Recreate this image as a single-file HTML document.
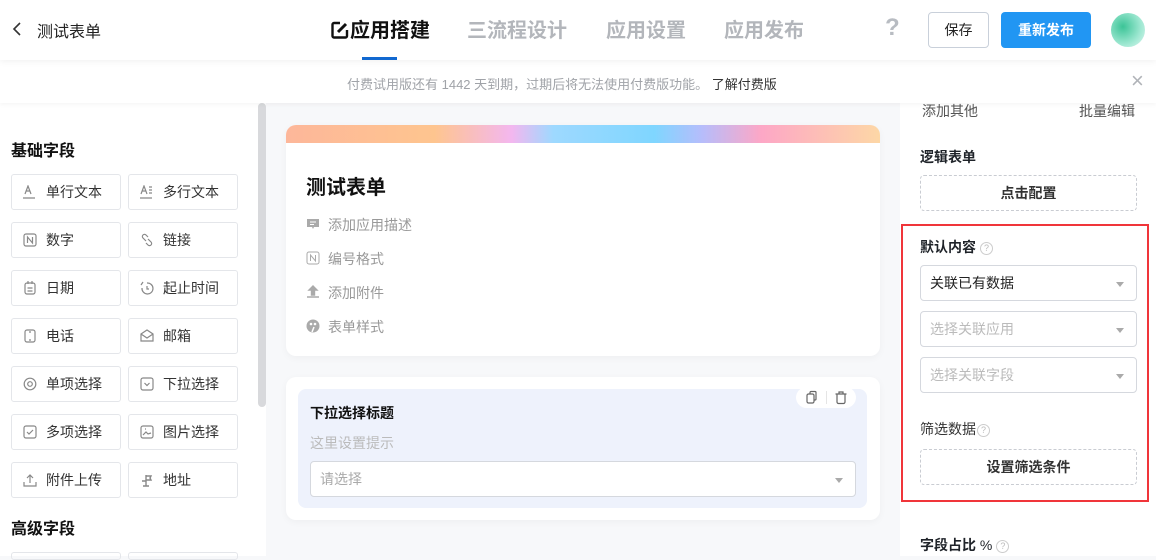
<!DOCTYPE html>
<html><head><meta charset="utf-8"><style>
*{box-sizing:border-box;margin:0;padding:0}
body{width:1156px;height:556px;overflow:hidden;background:#f7f8fa;font-family:"Liberation Sans","Noto Sans CJK SC",sans-serif;position:relative;color:#1f2329}
.a{position:absolute}
.hdr{left:0;top:0;width:1156px;height:60px;background:#fff;box-shadow:0 2px 6px rgba(0,0,0,.05);z-index:3}
.tab{top:16px;font-size:20px;font-weight:bold;color:#b3b6bb;line-height:30px}
.notice{left:0;top:60px;width:1156px;height:43px;background:#fff;z-index:2;box-shadow:0 2px 4px rgba(0,0,0,.04)}
.left{left:0;top:103px;width:266px;height:453px;background:#fff}
.fb{width:110px;height:36px;border:1px solid #e4e6ea;border-radius:3px;font-size:14px;color:#333;line-height:34px;padding-left:34px}
.fb svg{position:absolute;left:11px;top:10px}
.sec{font-size:16px;font-weight:bold;color:#111}
.card{background:#fff;border-radius:10px;box-shadow:0 2px 8px rgba(0,0,0,.04)}
.it{font-size:14px;color:#999;left:328px}
.ic{left:306px;width:14px;height:14px}
.right{left:900px;top:103px;width:256px;height:453px;background:#fff}
.lbl{font-size:14px;font-weight:bold;color:#1f2329}
.dash{border:1px dashed #c9ccd2;border-radius:4px;font-size:14px;font-weight:bold;color:#333;text-align:center;line-height:34px;height:36px;width:217px;left:920px}
.sel{left:920px;width:217px;height:36px;border:1px solid #d5d8de;border-radius:4px;font-size:14px;line-height:34px;padding-left:9px;color:#bbb}
.sel:after{content:"";position:absolute;right:12px;top:16px;border:4px solid transparent;border-top:5px solid #aaa}
.q{display:inline-block;width:13px;height:13px;border:1px solid #ccc;border-radius:50%;font-size:9px;color:#bbb;text-align:center;line-height:11px;font-weight:normal;vertical-align:1px;margin-left:4px}
</style></head><body>
<div class="a hdr">
  <svg class="a" style="left:12px;top:22px" width="10" height="14"><path d="M8 1 L2 7 L8 13" fill="none" stroke="#333" stroke-width="1.6"/></svg>
  <div class="a" style="left:37px;top:18px;font-size:16px;color:#222">测试表单</div>
  <svg class="a" style="left:330px;top:20px" width="20" height="20"><path d="M10 3 H4 a1.5 1.5 0 0 0 -1.5 1.5 V16 a1.5 1.5 0 0 0 1.5 1.5 H15.5 a1.5 1.5 0 0 0 1.5 -1.5 V10" fill="none" stroke="#111" stroke-width="2.4"/><path d="M8 12 L16 4" stroke="#111" stroke-width="3"/></svg>
  <div class="a tab" style="left:350px;color:#111">应用搭建</div>
  <div class="a" style="left:362px;top:57px;width:35px;height:3px;background:#1168d0"></div>
  <div class="a tab" style="left:467px">三流程设计</div>
  <div class="a tab" style="left:606px">应用设置</div>
  <div class="a tab" style="left:724px">应用发布</div>
  <div class="a" style="left:885px;top:14px;font-size:24px;font-weight:bold;color:#b8bcc2">?</div>
  <div class="a" style="left:928px;top:12px;width:61px;height:36px;border:1px solid #c9d0da;border-radius:4px;font-size:14px;text-align:center;line-height:34px;color:#222">保存</div>
  <div class="a" style="left:1001px;top:12px;width:90px;height:36px;background:#2196f3;border-radius:4px;font-size:14px;font-weight:bold;color:#fff;text-align:center;line-height:36px">重新发布</div>
  <div class="a" style="left:1111px;top:13px;width:34px;height:34px;border-radius:50%;background:radial-gradient(circle at 35% 40%,#3cc497,#9fe8d2 60%,#dff7f1)"></div>
</div>
<div class="a notice">
  <div class="a" style="left:347px;top:14px;font-size:13px;color:#a0a3a8">付费试用版还有 1442 天到期，过期后将无法使用付费版功能。 <span style="color:#333">了解付费版</span></div>
  <div class="a" style="left:1131px;top:8px;font-size:22px;color:#b0b3b8">×</div>
</div>
<div class="a left"></div>
<div class="a" style="left:258px;top:103px;width:8px;height:304px;background:#d8d9dc;border-radius:4px"></div>
<div class="a sec" style="left:11px;top:137px">基础字段</div>
<div class="a sec" style="left:11px;top:515px">高级字段</div>

<div class="a fb" style="left:11px;top:174px"><svg width="14" height="14"><path d="M2 9 L5 1 L8 9 M3 6 H7 M0 13 H12" stroke="#888" fill="none" stroke-width="1.2"/></svg>单行文本</div>
<div class="a fb" style="left:128px;top:174px"><svg width="14" height="14"><path d="M1 9 L4 1 L7 9 M2 6 H6 M9 2 H12 M9 5 H12 M9 8 H12 M0 13 H12" stroke="#888" fill="none" stroke-width="1.2"/></svg>多行文本</div>
<div class="a fb" style="left:11px;top:222px"><svg width="14" height="14"><rect x="1" y="1" width="12" height="12" rx="2" stroke="#888" fill="none" stroke-width="1.2"/><path d="M4.5 10 V4 L9.5 10 V4" stroke="#888" fill="none" stroke-width="1.2"/></svg>数字</div>
<div class="a fb" style="left:128px;top:222px"><svg width="14" height="14"><path d="M6 8 L3 5 a2 2 0 0 1 3 -3 L8 4 M8 6 L11 9 a2 2 0 0 1 -3 3 L6 10" stroke="#888" fill="none" stroke-width="1.2"/></svg>链接</div>
<div class="a fb" style="left:11px;top:270px"><svg width="14" height="14"><rect x="2" y="2" width="10" height="11" rx="2" stroke="#888" fill="none" stroke-width="1.2"/><path d="M5 0 V3 M9 0 V3 M4.5 7 H9.5 M4.5 10 H9.5" stroke="#888" stroke-width="1.2"/></svg>日期</div>
<div class="a fb" style="left:128px;top:270px"><svg width="14" height="14"><path d="M7 2 A5.5 5.5 0 1 1 2 7 M1 4 L3 1 M7 5 V8 H9" stroke="#888" fill="none" stroke-width="1.2"/></svg>起止时间</div>
<div class="a fb" style="left:11px;top:318px"><svg width="14" height="14"><rect x="2" y="1" width="10" height="12" rx="2" stroke="#888" fill="none" stroke-width="1.2"/><path d="M6 3 H8 M6 11 H8" stroke="#888" stroke-width="1.2"/></svg>电话</div>
<div class="a fb" style="left:128px;top:318px"><svg width="14" height="14"><path d="M1 5 L7 1 L13 5 V12 H1 Z M1 5 L7 9 L13 5" stroke="#888" fill="none" stroke-width="1.2"/></svg>邮箱</div>
<div class="a fb" style="left:11px;top:366px"><svg width="14" height="14"><circle cx="7" cy="7" r="5.8" stroke="#888" fill="none" stroke-width="1.2"/><circle cx="7" cy="7" r="2.3" stroke="#888" fill="none" stroke-width="1.2"/></svg>单项选择</div>
<div class="a fb" style="left:128px;top:366px"><svg width="14" height="14"><rect x="1" y="1" width="12" height="12" rx="2" stroke="#888" fill="none" stroke-width="1.2"/><path d="M4.5 6 L7 8.5 L9.5 6" stroke="#888" fill="none" stroke-width="1.2"/></svg>下拉选择</div>
<div class="a fb" style="left:11px;top:414px"><svg width="14" height="14"><rect x="1" y="1" width="12" height="12" rx="2" stroke="#888" fill="none" stroke-width="1.2"/><path d="M4 7 L6 9 L10 5" stroke="#888" fill="none" stroke-width="1.2"/></svg>多项选择</div>
<div class="a fb" style="left:128px;top:414px"><svg width="14" height="14"><rect x="1" y="1" width="12" height="12" rx="2" stroke="#888" fill="none" stroke-width="1.2"/><path d="M3 10 L6 7 L8 9 L11 8 M5 4 H6" stroke="#888" fill="none" stroke-width="1.2"/></svg>图片选择</div>
<div class="a fb" style="left:11px;top:462px"><svg width="14" height="14"><path d="M7 10 V2 M4 5 L7 2 L10 5 M1 9 V13 H13 V9" stroke="#888" fill="none" stroke-width="1.2"/></svg>附件上传</div>
<div class="a fb" style="left:128px;top:462px"><svg width="14" height="14"><path d="M6 2 V13 M3 13 H9 M6 3 H11 L10 5 L11 7 H6 M6 8 H2" stroke="#888" fill="none" stroke-width="1.4"/></svg>地址</div>
<div class="a" style="left:11px;top:552px;width:110px;height:8px;border:1px solid #e4e6ea;border-radius:3px"></div>
<div class="a" style="left:128px;top:552px;width:110px;height:8px;border:1px solid #e4e6ea;border-radius:3px"></div>

<div class="a card" style="left:286px;top:125px;width:594px;height:231px;overflow:hidden">
  <div style="height:18px;background:linear-gradient(90deg,#fdb79a,#fec58f 25%,#f3b7ef 38%,#9ed9ff 45%,#7fd6ff 62%,#b6bdfb 70%,#fda7c6 80%,#fdd7a6)"></div>
</div>
<div class="a" style="left:306px;top:171px;font-size:20px;font-weight:bold;color:#111">测试表单</div>
<svg class="a ic" style="top:217px"><path d="M1 2 H13 V10 H8 L7 12 L6 10 H1 Z" fill="#aaa"/><path d="M4 5 H10 M4 7.5 H8" stroke="#fff"/></svg>
<div class="a it" style="top:215px">添加应用描述</div>
<svg class="a ic" style="top:251px"><rect x="1" y="1" width="12" height="12" rx="2" stroke="#aaa" fill="none"/><path d="M4.5 10 V4 L9.5 10 V4" stroke="#aaa" fill="none"/></svg>
<div class="a it" style="top:249px">编号格式</div>
<svg class="a ic" style="top:285px"><path d="M7 1 L11 5 H8.5 V10 H5.5 V5 H3 Z M1 12 H13" fill="#aaa" stroke="#aaa" stroke-width="1.4"/></svg>
<div class="a it" style="top:283px">添加附件</div>
<svg class="a ic" style="top:319px"><circle cx="7" cy="7" r="6.5" fill="#aaa"/><circle cx="5" cy="5" r="1.3" fill="#fff"/><circle cx="9" cy="5" r="1.3" fill="#fff"/><path d="M6 13 L8 8" stroke="#fff" stroke-width="1.5"/></svg>
<div class="a it" style="top:317px">表单样式</div>

<div class="a card" style="left:286px;top:377px;width:594px;height:143px"></div>
<div class="a" style="left:298px;top:389px;width:569px;height:119px;background:#eef2fc;border-radius:8px"></div>
<div class="a" style="left:796px;top:387px;width:60px;height:21px;background:#fff;border-radius:11px">
  <svg class="a" style="left:9px;top:3px" width="14" height="15"><rect x="2" y="4" width="7" height="9" rx="1.5" stroke="#666" fill="none" stroke-width="1.2"/><path d="M5 4 V2.5 a1 1 0 0 1 1 -1 H10 a1 1 0 0 1 1 1 V9 a1 1 0 0 1 -1 1 H9" stroke="#666" fill="none" stroke-width="1.2"/></svg>
  <div class="a" style="left:30px;top:4px;width:1px;height:13px;background:#e5e5e5"></div>
  <svg class="a" style="left:38px;top:3px" width="14" height="15"><path d="M3 4 H11 V12 a1.5 1.5 0 0 1 -1.5 1.5 H4.5 A1.5 1.5 0 0 1 3 12 Z M5 4 V2 H9 V4 M1.5 4 H12.5" stroke="#666" fill="none" stroke-width="1.2"/></svg>
</div>
<div class="a" style="left:310px;top:403px;font-size:14px;font-weight:bold;color:#111">下拉选择标题</div>
<div class="a" style="left:310px;top:433px;font-size:14px;color:#bbb">这里设置提示</div>
<div class="a sel" style="left:310px;top:461px;width:546px;background:#fff;color:#aaa">请选择</div>

<div class="a right"></div>
<div class="a" style="left:922px;top:101px;font-size:14px;color:#555;z-index:1">添加其他</div>
<div class="a" style="left:1079px;top:101px;font-size:14px;color:#555;z-index:1">批量编辑</div>
<div class="a lbl" style="left:920px;top:147px">逻辑表单</div>
<div class="a dash" style="top:175px">点击配置</div>
<div class="a" style="left:901px;top:224px;width:248px;height:278px;border:2px solid #f0353a"></div>
<div class="a lbl" style="left:920px;top:237px">默认内容<span class="q">?</span></div>
<div class="a sel" style="top:265px;color:#222">关联已有数据</div>
<div class="a sel" style="top:311px">选择关联应用</div>
<div class="a sel" style="top:357px">选择关联字段</div>
<div class="a" style="left:920px;top:419px;font-size:14px;color:#333">筛选数据<span class="q" style="margin-left:1px">?</span></div>
<div class="a dash" style="top:449px">设置筛选条件</div>
<div class="a lbl" style="left:920px;top:535px">字段占比 <span style="font-weight:normal">%</span><span class="q">?</span></div>
</body></html>
